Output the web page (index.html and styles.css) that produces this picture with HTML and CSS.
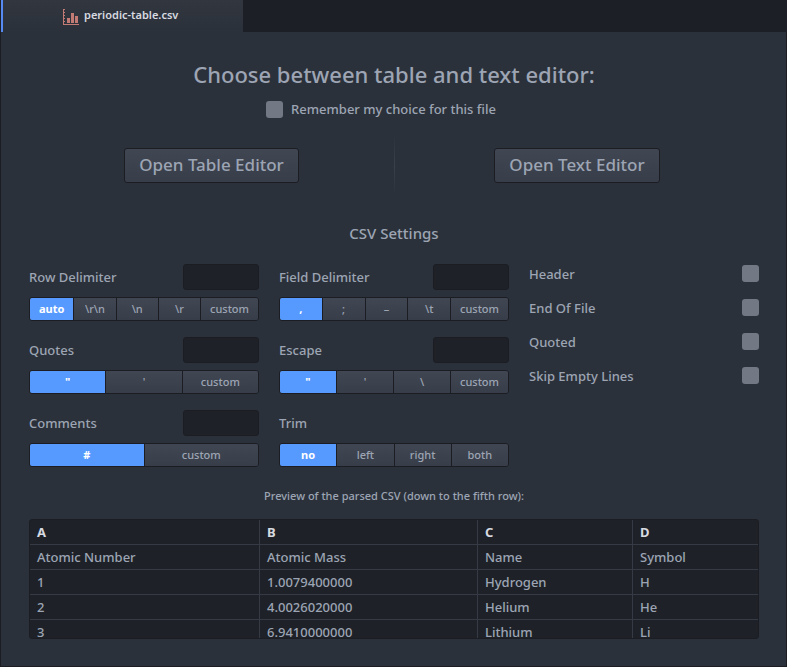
FILE: index.html
```html
<!DOCTYPE html>
<html lang="en">
<head>
<meta charset="utf-8">
<title>periodic-table.csv</title>
<link rel="stylesheet" href="styles.css">
</head>
<body>
<header class="tab-bar">
  <a class="tab" href="#editor" aria-current="page">
    <svg class="tab-icon" viewBox="0 0 16 16" aria-hidden="true">
      <path d="M0 0h2v1H1v2h1v1H1v2h1v1H1v2h1v1H1v2h1v1H1v2h15v1H0zM4 9h3v5H4zM8 4h3v10H8zM12 7h3v7h-3z"/>
    </svg>
    <span>periodic-table.csv</span>
  </a>
</header>
<main class="pane" id="editor">
  <section class="choice">
    <h1>Choose between table and text editor:</h1>
    <label class="remember"><input type="checkbox"> <span>Remember my choice for this file</span></label>
    <div class="openers">
      <div class="opener"><button class="btn-large" type="button">Open Table Editor</button></div>
      <div class="opener"><button class="btn-large" type="button">Open Text Editor</button></div>
    </div>
  </section>
  <form class="settings">
    <h2>CSV Settings</h2>
    <div class="columns">
      <div class="column">
        <div class="setting">
          <div class="field"><label for="row-delimiter">Row Delimiter</label><input type="text" id="row-delimiter"></div>
          <div class="btn-group"><button type="button" class="selected">auto</button><button type="button">\r\n</button><button type="button">\n</button><button type="button">\r</button><button type="button">custom</button></div>
        </div>
        <div class="setting">
          <div class="field"><label for="quotes">Quotes</label><input type="text" id="quotes"></div>
          <div class="btn-group"><button type="button" class="selected">"</button><button type="button">'</button><button type="button">custom</button></div>
        </div>
        <div class="setting">
          <div class="field"><label for="comments">Comments</label><input type="text" id="comments"></div>
          <div class="btn-group"><button type="button" class="selected">#</button><button type="button">custom</button></div>
        </div>
      </div>
      <div class="column">
        <div class="setting">
          <div class="field"><label for="field-delimiter">Field Delimiter</label><input type="text" id="field-delimiter"></div>
          <div class="btn-group"><button type="button" class="selected">,</button><button type="button">;</button><button type="button">–</button><button type="button">\t</button><button type="button">custom</button></div>
        </div>
        <div class="setting">
          <div class="field"><label for="escape">Escape</label><input type="text" id="escape"></div>
          <div class="btn-group"><button type="button" class="selected">"</button><button type="button">'</button><button type="button">\</button><button type="button">custom</button></div>
        </div>
        <div class="setting">
          <div class="field"><span>Trim</span></div>
          <div class="btn-group"><button type="button" class="selected">no</button><button type="button">left</button><button type="button">right</button><button type="button">both</button></div>
        </div>
      </div>
      <div class="column checks">
        <label>Header <input type="checkbox"></label>
        <label>End Of File <input type="checkbox"></label>
        <label>Quoted <input type="checkbox"></label>
        <label>Skip Empty Lines <input type="checkbox"></label>
      </div>
    </div>
  </form>
  <section class="preview">
    <p>Preview of the parsed CSV (down to the fifth row):</p>
    <div class="table-wrap">
      <table>
        <colgroup><col class="col-a"><col class="col-b"><col class="col-c"><col></colgroup>
        <thead><tr><th>A</th><th>B</th><th>C</th><th>D</th></tr></thead>
        <tbody>
          <tr><td>Atomic Number</td><td>Atomic Mass</td><td>Name</td><td>Symbol</td></tr>
          <tr><td>1</td><td>1.0079400000</td><td>Hydrogen</td><td>H</td></tr>
          <tr><td>2</td><td>4.0026020000</td><td>Helium</td><td>He</td></tr>
          <tr><td>3</td><td>6.9410000000</td><td>Lithium</td><td>Li</td></tr>
        </tbody>
      </table>
    </div>
  </section>
</main>
</body>
</html>
```
FILE: styles.css
```css
* { box-sizing: border-box; }

body {
  margin: 0;
  min-height: 100vh;
  display: flex;
  flex-direction: column;
  background: #2b303a;
  color: #9da5b4;
  font: 500 13px/18px "Noto Sans", sans-serif;
}

button, input { font: inherit; color: inherit; margin: 0; }
h1, h2, p { margin: 0; font-weight: 500; text-align: center; }

.tab-bar {
  display: flex;
  height: 32px;
  padding-left: 1px;
  background: #1c1f26;
}

.tab {
  flex: 0 1 242px;
  display: flex;
  align-items: center;
  gap: 5px;
  padding: 0 0 2px 60px;
  border-left: 2px solid #568af2;
  background: linear-gradient(#31363f, #2b313a);
  color: #d7dae0;
  font-size: 11px;
  font-weight: 600;
  text-decoration: none;
}

.tab-icon { width: 16px; height: 16px; fill: #c27a75; margin-top: 3px; }

.pane {
  flex: 1;
  padding: 26px 27px 27px 28px;
  border: solid #1b1d23;
  border-width: 0 1px 1px;
  background: #2b313a;
}

h1 { font-size: 22px; line-height: 32px; }

input[type="checkbox"] {
  appearance: none;
  width: 17px;
  height: 17px;
  border-radius: 3px;
  background: #737984;
}

.remember {
  display: flex;
  align-items: center;
  justify-content: center;
  gap: 8px;
  margin-top: 10px;
  padding-right: 26px;
}

.openers {
  display: grid;
  grid-template-columns: 1fr 1fr;
  margin-top: 17px;
}

.opener {
  display: flex;
  align-items: center;
  justify-content: center;
  height: 60px;
}

.opener + .opener {
  border-left: 1px solid;
  border-image: linear-gradient(transparent, #3b404a, transparent) 1;
}

.btn-large {
  height: 35px;
  padding: 0 14px;
  border: 1px solid #1b1d23;
  border-radius: 3px;
  background: linear-gradient(#404652, #383e49);
  font-size: 17px;
}

h2 { margin-top: 26px; font-size: 15px; line-height: 24px; }

.columns {
  display: grid;
  grid-template-columns: repeat(3, 1fr);
  gap: 20px;
  margin-top: 19px;
}

.column { display: flex; flex-direction: column; gap: 16px; }

.field {
  display: flex;
  align-items: center;
  justify-content: space-between;
  height: 26px;
}

.field input {
  width: 76px;
  height: 26px;
  border: 1px solid #1b1d23;
  border-radius: 3px;
  background: #1e2228;
}

.btn-group {
  display: flex;
  height: 24px;
  margin-top: 7px;
  border: 1px solid #1b1d23;
  border-radius: 3px;
  overflow: hidden;
}

.btn-group button {
  flex: 1 1 0;
  padding: 0 9px;
  border: 0;
  background: linear-gradient(#404652, #383e49);
  font-size: 11px;
  line-height: 22px;
}

.btn-group button + button { border-left: 1px solid #1b1d23; }

.btn-group .selected {
  background: #579aff;
  color: #fff;
  font-weight: 700;
}

.checks { gap: 17px; padding-top: 1px; }

.checks label {
  display: flex;
  align-items: center;
  justify-content: space-between;
  height: 17px;
}

.preview p { margin: 20px 0 14px; font-size: 11px; }

.table-wrap {
  height: 120px;
  border: 1px solid #1b1d23;
  border-radius: 3px;
  background: #1e2228;
  overflow: hidden;
}

table { width: 100%; table-layout: fixed; border-collapse: separate; border-spacing: 0; }
.col-a { width: 229px; }
.col-b { width: 218px; }
.col-c { width: 155px; }

th, td {
  height: 25px;
  padding: 0 7px;
  border-bottom: 1px solid #353a45;
  text-align: left;
}

th + th, td + td { border-left: 1px solid #353a45; }
th { color: #d7dae0; font-weight: 700; }
```
